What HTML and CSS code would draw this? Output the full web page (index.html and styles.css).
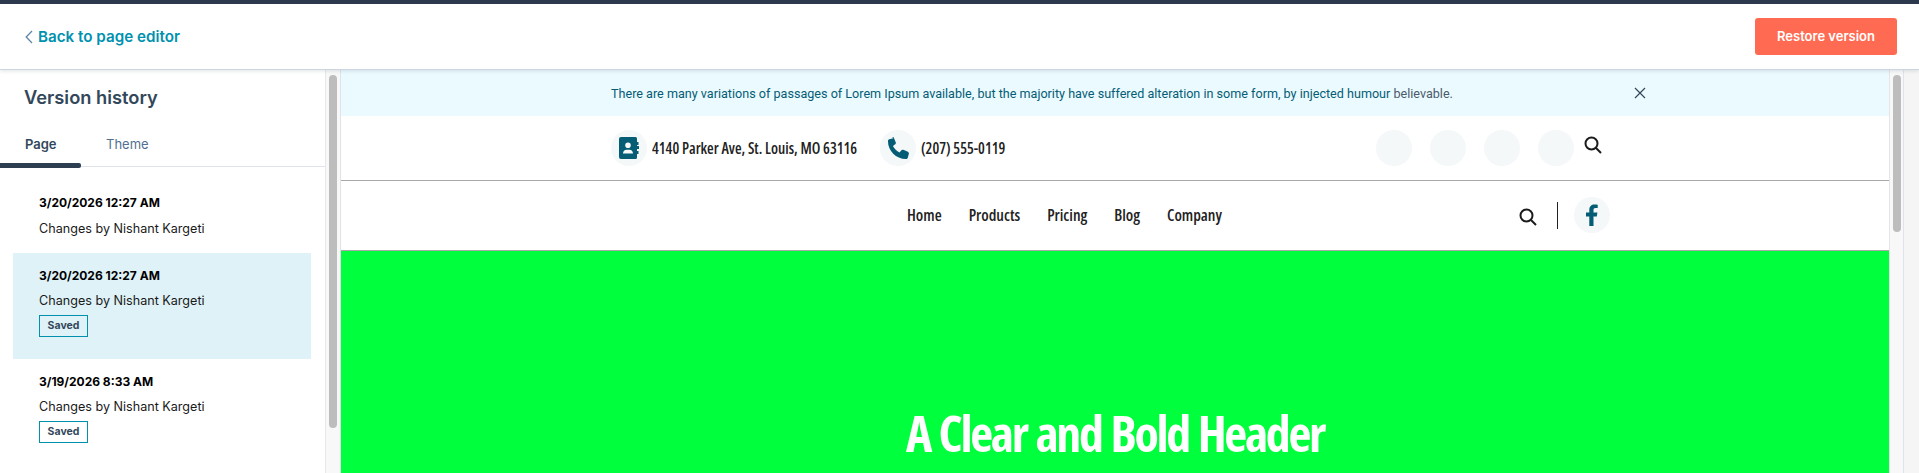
FILE: index.html
```html
<!DOCTYPE html>
<html>
<head>
    <title>Version history</title>
    <meta name="viewport" content="width=device-width, initial-scale=1.0">
    <link rel="stylesheet" href="styles.css">
</head>
<body>
    <div class="topbar">
        <a class="back-link">
            <svg class="back-icon" viewBox="0 0 8 14"><path d="M7 1 1.2 7 7 13"/></svg>
            Back to page editor
        </a>
        <button class="restore-btn">Restore version</button>
    </div>

    <div class="main">
        <div class="sidebar">
            <div class="sidebar-content">
                <h2>Version history</h2>
                <div class="tabs">
                    <div class="tab active">Page</div>
                    <div class="tab">Theme</div>
                </div>
                <div class="versions">
                    <div class="version">
                        <div class="version-date">3/20/2026 12:27 AM</div>
                        <div class="version-author">Changes by Nishant Kargeti</div>
                    </div>
                    <div class="version selected">
                        <div class="version-date">3/20/2026 12:27 AM</div>
                        <div class="version-author">Changes by Nishant Kargeti</div>
                        <span class="saved-tag">Saved</span>
                    </div>
                    <div class="version last">
                        <div class="version-date">3/19/2026 8:33 AM</div>
                        <div class="version-author">Changes by Nishant Kargeti</div>
                        <span class="saved-tag">Saved</span>
                    </div>
                </div>
            </div>
            <div class="scroll-track"><div class="scroll-thumb sidebar-thumb"></div></div>
        </div>

        <div class="preview">
            <div class="notice">
                <p>There are many variations of passages of Lorem Ipsum available, but the majority have suffered alteration in some form, by injected humour <span class="notice-end">believable.</span></p>
                <svg class="notice-close" viewBox="0 0 12 12"><path d="M1 1 11 11M11 1 1 11"/></svg>
            </div>

            <div class="info-row">
                <div class="info-item">
                    <span class="round-icon">
                        <svg viewBox="0 0 20 22" class="book-icon">
                            <path fill="#045d75" fill-rule="evenodd" d="M2 0h14.5a1.5 1.5 0 0 1 1.5 1.5V5h1.5v3H18v1h2v3h-2v2h1.5v3H18v3.500a1.500 1.500 0 0 1-1.500 1.500H2a2 2 0 0 1-2-2V2a2 2 0 0 1 2-2Zm7 5.500a2.800 2.800 0 1 0 0 5.600 2.800 2.800 0 0 0 0-5.600ZM4 16.500h10c0-2.300-1.600-3.700-3.500-3.700h-3C5.600 12.800 4 14.200 4 16.500Z"/>
                        </svg>
                    </span>
                    <span class="info-text">4140 Parker Ave, St. Louis, MO 63116</span>
                </div>
                <div class="info-item">
                    <span class="round-icon">
                        <svg viewBox="0 0 24 24" class="phone-icon">
                            <path fill="#045d75" d="M6.600 1.200 2.400 2.300C1.500 2.600 1 3.300 1 4.200 1 14.600 9.400 23 19.800 23c.9 0 1.600-.5 1.900-1.400l1.100-4.200c.2-.8-.2-1.600-1-2l-4.800-2c-.7-.3-1.500-.1-2 .5l-1.900 2.400c-3-1.500-5.400-4-6.900-6.900l2.400-1.900c.6-.5.800-1.300.5-2l-2-4.800c-.4-.8-1.200-1.200-2-1Z"/>
                        </svg>
                    </span>
                    <span class="info-text">(207) 555-0119</span>
                </div>
                <div class="socials">
                    <span class="round-icon"></span>
                    <span class="round-icon"></span>
                    <span class="round-icon"></span>
                    <span class="round-icon"></span>
                    <svg class="search-icon top-search" viewBox="0 0 18 18"><circle cx="7.500" cy="7.500" r="6"/><path d="M12 12l5 5"/></svg>
                </div>
            </div>

            <div class="nav-row">
                <nav class="nav-links">
                    <a>Home</a>
                    <a>Products</a>
                    <a>Pricing</a>
                    <a>Blog</a>
                    <a>Company</a>
                </nav>
                <div class="nav-tools">
                    <svg class="search-icon nav-search" viewBox="0 0 18 18"><circle cx="7.500" cy="7.500" r="6"/><path d="M12 12l5 5"/></svg>
                    <span class="nav-divider"></span>
                    <span class="round-icon">
                        <svg viewBox="0 0 12 22" class="fb-icon">
                            <path fill="#045d75" d="M3.300 22V12.500H0V8.600h3.300V5.800C3.300 2.300 5.300.4 8.500.4c1.500 0 2.900.2 3.200.3v3.400H9.600c-1.700 0-2.100.9-2.100 2.100v2.400h3.900l-.6 3.900H7.500V22Z"/>
                        </svg>
                    </span>
                </div>
            </div>

            <div class="hero">
                <h1>A Clear and Bold Header</h1>
            </div>
        </div>

        <div class="scroll-track page-track"><div class="scroll-thumb page-thumb"></div></div>
        <div class="page-gutter"></div>
    </div>
</body>
</html>
```

FILE: styles.css
```css
* {
    margin: 0;
    padding: 0;
    box-sizing: border-box;
}

html, body {
    height: 100%;
    overflow: hidden;
}

body {
    background: #fff;
    font-family: Inter, "Noto Sans", sans-serif;
    color: #33475b;
    display: flex;
    flex-direction: column;
    border-top: 4px solid #2d3a4e;
}

.topbar {
    height: 66px;
    flex-shrink: 0;
    display: flex;
    align-items: center;
    justify-content: space-between;
    padding: 0 22px 0 25px;
    background: #fff;
    border-bottom: 1px solid #cbd6e2;
    box-shadow: 0 1px 4px rgba(45, 62, 80, 0.15);
    position: relative;
    z-index: 2;
}

.back-link {
    display: flex;
    align-items: center;
    gap: 5px;
    color: #0091ae;
    font-size: 15.200px;
    font-weight: 600;
}

.back-icon {
    width: 8px;
    height: 14px;
    fill: none;
    stroke: #5f86a8;
    stroke-width: 1.300;
}

.restore-btn {
    width: 142px;
    height: 37px;
    margin-top: -1px;
    border: none;
    border-radius: 3px;
    background: #ff6b52;
    color: #fff;
    font-family: inherit;
    font-size: 13px;
    font-weight: 600;
}

.main {
    flex: 1;
    display: flex;
    min-height: 0;
}

.sidebar {
    width: 341px;
    flex-shrink: 0;
    display: flex;
}

.sidebar-content {
    width: 326px;
    border-right: 1px solid #e5e9ef;
}

.sidebar-content h2 {
    font-size: 18.300px;
    font-weight: 600;
    line-height: 24px;
    padding: 15px 0 0 24px;
}

.tabs {
    display: flex;
    height: 51px;
    margin-top: 7px;
    padding-top: 18px;
    border-bottom: 1px solid #dfe3eb;
}

.tab {
    width: 81px;
    padding-left: 25px;
    font-size: 13px;
    line-height: 20px;
    color: #516f90;
    position: relative;
    height: 33px;
}

.tab.active {
    font-weight: 600;
    color: #33475b;
}

.tab.active::after {
    content: "";
    position: absolute;
    left: 0;
    right: 0;
    bottom: -1px;
    height: 5px;
    border-radius: 0 2px 2px 0;
    background: #2d3e50;
}

.versions {
    padding: 14px 14px 0 13px;
}

.version {
    padding: 13px 26px 0;
    height: 72px;
}

.version.selected,
.version.last {
    height: 106px;
    padding-top: 14px;
}

.version.selected {
    background: #dff2f7;
}

.version-date {
    font-size: 12px;
    font-weight: 700;
    line-height: 18px;
    color: #000;
}

.version-author {
    font-size: 12.600px;
    line-height: 18px;
    margin-top: 8px;
    color: #1a1a1a;
}

.version.selected .version-author,
.version.last .version-author {
    margin-top: 7px;
}

.saved-tag {
    display: block;
    width: 49px;
    height: 22px;
    margin-top: 5px;
    border: 1px solid #0091ae;
    font-size: 10.500px;
    font-weight: 700;
    line-height: 19px;
    text-align: center;
    color: #33475b;
}

.scroll-track {
    width: 15px;
    background: #f8f8f8;
    padding: 5px 3px 0;
    border-right: 1px solid #dfe3eb;
}

.scroll-thumb {
    width: 8px;
    border-radius: 4px;
    background: #bdbdbd;
}

.sidebar-thumb {
    height: 353px;
}

.preview {
    flex: 1;
    min-width: 0;
    display: flex;
    flex-direction: column;
}

.notice {
    height: 46px;
    flex-shrink: 0;
    display: flex;
    align-items: center;
    padding: 0 243px 0 270px;
    background: #ebfaff;
    font-family: Roboto, sans-serif;
    font-size: 12.600px;
    color: #045d75;
    white-space: nowrap;
}

.notice-end {
    color: #4c5c6c;
}

.notice-close {
    width: 12px;
    height: 12px;
    margin-left: auto;
    fill: none;
    stroke: #33475b;
    stroke-width: 1.200;
}

.info-row {
    height: 65px;
    flex-shrink: 0;
    display: flex;
    align-items: center;
    padding: 0 288px 0 270px;
    border-bottom: 1px solid #a9a9a9;
    color: #222;
}

.info-item {
    display: flex;
    align-items: center;
    gap: 5px;
    margin-right: 23px;
}

.info-text {
    font-family: "Open Sans", sans-serif;
    font-stretch: 75%;
    font-weight: 600;
    font-size: 15.200px;
    white-space: nowrap;
}

.round-icon {
    width: 36px;
    height: 36px;
    flex-shrink: 0;
    display: flex;
    align-items: center;
    justify-content: center;
    border-radius: 50%;
    background: #f4f8f9;
}

.book-icon {
    width: 20px;
    height: 22px;
}

.phone-icon {
    width: 23px;
    height: 23px;
}

.socials {
    display: flex;
    align-items: center;
    gap: 18px;
    margin-left: auto;
}

.search-icon {
    width: 18px;
    height: 18px;
    fill: none;
    stroke: #1b1b1b;
    stroke-width: 2;
}

.top-search {
    margin: -6px -1px 0 -8px;
}

.nav-search {
    margin: 4px 0 0 1px;
}

.nav-row {
    height: 70px;
    flex-shrink: 0;
    display: flex;
    align-items: center;
    padding: 0 279px 1px 566px;
    border-bottom: 1px solid #a9a9a9;
}

.nav-links {
    display: flex;
    gap: 27px;
    font-family: "Open Sans", sans-serif;
    font-stretch: 75%;
    font-size: 16px;
    font-weight: 600;
    color: #222;
}

.nav-tools {
    display: flex;
    align-items: center;
    margin-left: auto;
}

.nav-divider {
    width: 1px;
    height: 27px;
    margin: 0 16px 0 20px;
    background: #222;
}

.fb-icon {
    width: 12px;
    height: 22px;
}

.hero {
    flex: 1;
    background: #00ff3c;
    display: flex;
    justify-content: center;
    padding-top: 152px;
}

.hero h1 {
    font-family: "Open Sans", sans-serif;
    font-stretch: 75%;
    font-size: 50px;
    font-weight: 700;
    letter-spacing: -2.300px;
    word-spacing: 2px;
    line-height: 60px;
    color: #fff;
    white-space: nowrap;
}

.page-track {
    flex-shrink: 0;
    border-left: 1px solid #e5e5e5;
}

.page-thumb {
    height: 157px;
}

.page-gutter {
    width: 15px;
    flex-shrink: 0;
    background: #f5f5f5;
}
```
